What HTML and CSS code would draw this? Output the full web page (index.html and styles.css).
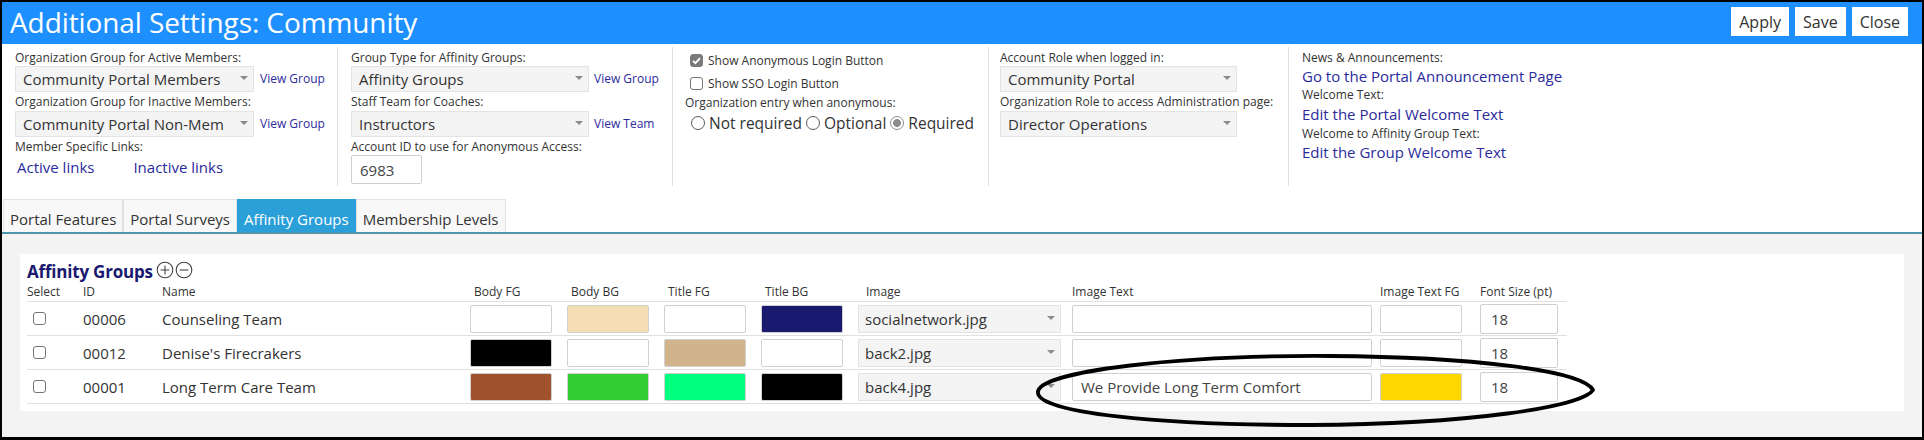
FILE: index.html
```html
<!DOCTYPE html>
<html lang="en">
<head>
<meta charset="utf-8">
<title>Additional Settings: Community</title>
<link rel="stylesheet" href="styles.css">
</head>
<body>
<div class="frame">
  <header class="topbar">
    <h1 class="title">Additional Settings: Community</h1>
    <div class="actions">
      <button class="btn">Apply</button>
      <button class="btn">Save</button>
      <button class="btn">Close</button>
    </div>
  </header>

  <section class="settings">
    <div class="col col-1">
      <div class="lbl">Organization Group for Active Members:</div>
      <div class="field">
        <div class="select sel-a">Community Portal Members</div>
        <a class="link-sm">View Group</a>
      </div>
      <div class="lbl mt2">Organization Group for Inactive Members:</div>
      <div class="field mt1">
        <div class="select sel-a">Community Portal Non-Mem</div>
        <a class="link-sm">View Group</a>
      </div>
      <div class="lbl mt2">Member Specific Links:</div>
      <div class="links mt2">
        <a class="link">Active links</a>
        <a class="link">Inactive links</a>
      </div>
    </div>

    <div class="col col-2">
      <div class="lbl">Group Type for Affinity Groups:</div>
      <div class="field gap5">
        <div class="select sel-b">Affinity Groups</div>
        <a class="link-sm">View Group</a>
      </div>
      <div class="lbl mt2">Staff Team for Coaches:</div>
      <div class="field gap5 mt1">
        <div class="select sel-b">Instructors</div>
        <a class="link-sm">View Team</a>
      </div>
      <div class="lbl mt2">Account ID to use for Anonymous Access:</div>
      <div class="textbox acct">6983</div>
    </div>

    <div class="col col-3">
      <div class="checkrow">
        <span class="cb on"><svg viewBox="0 0 13 13" width="13" height="13"><path d="M3 6.8l2.4 2.4L10 4.2" fill="none" stroke="#fff" stroke-width="1.8"/></svg></span>
        <span>Show Anonymous Login Button</span>
      </div>
      <div class="checkrow mt3">
        <span class="cb"></span>
        <span>Show SSO Login Button</span>
      </div>
      <div class="lbl mt2">Organization entry when anonymous:</div>
      <div class="radios mt1">
        <span class="rd"></span><span class="rtext">Not required</span>
        <span class="rd"></span><span class="rtext">Optional</span>
        <span class="rd on"></span><span class="rtext">Required</span>
      </div>
    </div>

    <div class="col col-4">
      <div class="lbl">Account Role when logged in:</div>
      <div class="field">
        <div class="select sel-c">Community Portal</div>
      </div>
      <div class="lbl mt2">Organization Role to access Administration page:</div>
      <div class="field mt1">
        <div class="select sel-c">Director Operations</div>
      </div>
    </div>

    <div class="col col-5">
      <div class="lbl">News &amp; Announcements:</div>
      <a class="link block">Go to the Portal Announcement Page</a>
      <div class="lbl mt1">Welcome Text:</div>
      <a class="link block mt1">Edit the Portal Welcome Text</a>
      <div class="lbl mt2">Welcome to Affinity Group Text:</div>
      <a class="link block">Edit the Group Welcome Text</a>
    </div>
  </section>

  <nav class="tabs">
    <span class="tab">Portal Features</span>
    <span class="tab">Portal Surveys</span>
    <span class="tab active">Affinity Groups</span>
    <span class="tab">Membership Levels</span>
  </nav>

  <div class="tab-body">
    <div class="panel">
      <h2 class="panel-title">Affinity Groups
        <svg class="pm" viewBox="0 0 38 18" width="38" height="18">
          <circle cx="9" cy="9" r="7.8" fill="none" stroke="#444" stroke-width="1.1"/>
          <path d="M9 4.6v8.8M4.6 9h8.8" stroke="#444" stroke-width="1.1"/>
          <circle cx="28" cy="9" r="7.8" fill="none" stroke="#444" stroke-width="1.1"/>
          <path d="M23.6 9h8.8" stroke="#444" stroke-width="1.1"/>
        </svg>
      </h2>

      <div class="trow thead">
        <span>Select</span>
        <span class="c">ID</span>
        <span class="c">Name</span>
        <span class="ch">Body FG</span>
        <span class="ch">Body BG</span>
        <span class="ch">Title FG</span>
        <span class="ch">Title BG</span>
        <span class="ch img">Image</span>
        <span class="c">Image Text</span>
        <span class="c">Image Text FG</span>
        <span class="c">Font Size (pt)</span>
      </div>

      <div class="trow">
        <span class="cell-cb"><span class="cb"></span></span>
        <span class="c">00006</span>
        <span class="c">Counseling Team</span>
        <span class="c"><span class="swatch" style="background:#ffffff"></span></span>
        <span class="c"><span class="swatch" style="background:#f5deb3"></span></span>
        <span class="c"><span class="swatch" style="background:#ffffff"></span></span>
        <span class="c"><span class="swatch" style="background:#191970"></span></span>
        <span class="c"><span class="select sel-img">socialnetwork.jpg</span></span>
        <span class="c"><span class="textbox wide"></span></span>
        <span class="c"><span class="swatch" style="background:#ffffff"></span></span>
        <span class="c"><span class="textbox small">18</span></span>
      </div>

      <div class="trow">
        <span class="cell-cb"><span class="cb"></span></span>
        <span class="c">00012</span>
        <span class="c">Denise's Firecrakers</span>
        <span class="c"><span class="swatch" style="background:#000000"></span></span>
        <span class="c"><span class="swatch" style="background:#ffffff"></span></span>
        <span class="c"><span class="swatch" style="background:#d2b48c"></span></span>
        <span class="c"><span class="swatch" style="background:#ffffff"></span></span>
        <span class="c"><span class="select sel-img">back2.jpg</span></span>
        <span class="c"><span class="textbox wide"></span></span>
        <span class="c"><span class="swatch" style="background:#ffffff"></span></span>
        <span class="c"><span class="textbox small">18</span></span>
      </div>

      <div class="trow">
        <span class="cell-cb"><span class="cb"></span></span>
        <span class="c">00001</span>
        <span class="c">Long Term Care Team</span>
        <span class="c"><span class="swatch" style="background:#a0522d"></span></span>
        <span class="c"><span class="swatch" style="background:#32cd32"></span></span>
        <span class="c"><span class="swatch" style="background:#00ff7f"></span></span>
        <span class="c"><span class="swatch" style="background:#000000"></span></span>
        <span class="c"><span class="select sel-img">back4.jpg</span></span>
        <span class="c"><span class="textbox wide">We Provide Long Term Comfort</span></span>
        <span class="c"><span class="swatch" style="background:#ffd700"></span></span>
        <span class="c"><span class="textbox small">18</span></span>
      </div>
    </div>
  </div>

  <!-- hand-drawn marker ring around the last row's image text -->
  <svg class="marker" viewBox="0 0 570 82" width="570" height="82">
    <path d="M8 42 C 9 21 150 5 300 6 C 440 7 552 20 563 40 C 552 57 440 74 280 75 C 130 75 6 63 8 42 Z"
          fill="none" stroke="#000" stroke-width="3.8" stroke-linejoin="round"/>
  </svg>
</div>
</body>
</html>
```

FILE: styles.css
```css
* {
  box-sizing: border-box;
}

html, body {
  margin: 0;
  padding: 0;
  background: #fff;
}

body {
  font-family: "Open Sans", "Noto Sans", sans-serif;
  color: #333;
}

.frame {
  position: relative;
  width: 1924px;
  height: 440px;
  border: 2px solid #000;
  border-bottom-width: 3px;
  background: #fff;
  overflow: hidden;
}

/* ---- top bar ---- */
.topbar {
  display: flex;
  justify-content: space-between;
  align-items: flex-start;
  height: 42px;
  background: #1e8fff;
  padding: 0 14px 0 8px;
}

.title {
  margin: 0;
  font-weight: 400;
  font-size: 28px;
  line-height: 41px;
  color: #fff;
  letter-spacing: -0.1px;
}

.actions {
  display: flex;
  gap: 6px;
  margin-top: 5px;
}

.btn {
  height: 29px;
  padding: 0 8px;
  border: 0;
  background: #fff;
  color: #333;
  font-family: inherit;
  font-size: 16px;
}

/* ---- settings strip ---- */
.settings {
  display: flex;
  height: 142px;
  padding-top: 3px;
}

.col {
  height: 139px;
  padding-top: 3px;
  border-right: 1px solid #dedede;
}

.col-1 { width: 336px; padding-left: 13px; }
.col-2 { width: 335px; padding-left: 13px; }
.col-3 { width: 316px; padding-left: 12px; }
.col-4 { width: 300px; padding-left: 11px; }
.col-5 { flex: 1; padding-left: 13px; border-right: 0; }

.lbl {
  font-size: 12px;
  line-height: 16px;
  height: 16px;
  white-space: nowrap;
  color: #333;
}

.mt1 { margin-top: 1px; }
.mt2 { margin-top: 2px; }
.mt3 { margin-top: 3px; }

.field {
  display: flex;
  align-items: center;
  gap: 6px;
  height: 26px;
}

.field.gap5 { gap: 5px; }

.select {
  display: flex;
  align-items: center;
  justify-content: space-between;
  height: 26px;
  padding: 0 5px 0 7px;
  background: #f4f4f4;
  border: 1px solid #e3e3e3;
  font-size: 15px;
  color: #333;
  white-space: nowrap;
}

.select::after {
  content: "";
  border-left: 4px solid transparent;
  border-right: 4px solid transparent;
  border-top: 4px solid #8a8a8a;
  margin-top: -2px;
}

.sel-a { width: 239px; }
.sel-b { width: 238px; }
.sel-c { width: 237px; }

.link-sm {
  font-size: 12px;
  color: #2b2b9c;
  white-space: nowrap;
  margin-top: -2px;
}

.link {
  font-size: 15px;
  line-height: 20px;
  color: #2b2b9c;
  white-space: nowrap;
}

.link.block {
  display: block;
  height: 20px;
}

.links {
  display: flex;
  gap: 39px;
  padding-left: 2px;
  height: 20px;
}

.textbox {
  display: flex;
  align-items: center;
  background: #fff;
  border: 1px solid #cfcfcf;
  border-radius: 2px;
  font-size: 15px;
  color: #444;
  padding: 0 8px;
  white-space: nowrap;
}

.acct {
  width: 71px;
  height: 29px;
}

/* checkbox and radio controls */
.checkrow {
  display: flex;
  align-items: center;
  gap: 5px;
  height: 20px;
  padding-left: 5px;
  font-size: 12px;
}

.cb {
  display: inline-flex;
  width: 13px;
  height: 13px;
  border: 1px solid #767676;
  border-radius: 3px;
  background: #fff;
  flex: none;
}

.cb.on {
  background: #7a7a7a;
  border-color: #7a7a7a;
}

.cb.on svg {
  margin: -1px;
}

.radios {
  display: flex;
  align-items: center;
  height: 22px;
  padding-left: 6px;
  font-size: 15.5px;
}

.rd {
  width: 14px;
  height: 14px;
  border: 1px solid #5a5a5a;
  border-radius: 50%;
  flex: none;
  margin-right: 4px;
}

.rd.on {
  border-color: #8c8c8c;
  background: radial-gradient(circle, #8c8c8c 0 3.6px, #fff 4.2px);
}

.rtext {
  margin-right: 4px;
  white-space: nowrap;
}

/* ---- tabs ---- */
.tabs {
  display: flex;
  height: 35px;
  margin-top: 13px;
  padding-left: 1px;
  border-bottom: 2px solid #4e96ab;
}

.tab {
  height: 33px;
  line-height: 26px;
  padding: 6px 6px 0;
  border: 1px solid #e2e2e2;
  border-bottom: 0;
  background: #f8f8f8;
  font-size: 15px;
  color: #333;
  white-space: nowrap;
}

.tab.active {
  background: #2b9fd8;
  border-color: #2b9fd8;
  color: #fff;
}

.tab-body {
  height: 203px;
  padding: 20px 18px 0;
  background: #f3f3f3;
}

.panel {
  height: 157px;
  padding: 7px 7px 0;
  background: #fff;
}

.panel-title {
  display: flex;
  align-items: center;
  margin: 0;
  height: 21px;
  font-size: 17px;
  font-weight: 700;
  color: #191970;
  letter-spacing: -0.2px;
}

.pm {
  margin-left: 3px;
  margin-top: -3px;
}

/* ---- groups table ---- */
.trow {
  display: grid;
  grid-template-columns: 53px 79px 308px 97px 97px 97px 97px 214px 308px 100px 90px;
  align-items: center;
  width: 1540px;
  height: 34px;
  border-bottom: 1px solid #e0e0e0;
  font-size: 15px;
  color: #333;
}

.trow.thead {
  height: 20px;
  font-size: 12px;
}

.c {
  padding-left: 3px;
  white-space: nowrap;
}

.ch {
  padding-left: 7px;
  white-space: nowrap;
}

.ch.img {
  padding-left: 11px;
}

.cell-cb {
  display: flex;
  padding-left: 6px;
}

.swatch {
  display: block;
  width: 82px;
  height: 28px;
  border: 1px solid #d0d0d0;
  border-radius: 2px;
}

.sel-img {
  width: 203px;
  height: 28px;
  padding-left: 6px;
}

.textbox.wide {
  width: 300px;
  height: 28px;
}

.textbox.small {
  width: 78px;
  height: 30px;
  padding-left: 10px;
}

.marker {
  position: absolute;
  left: 1028px;
  top: 348px;
}
```
